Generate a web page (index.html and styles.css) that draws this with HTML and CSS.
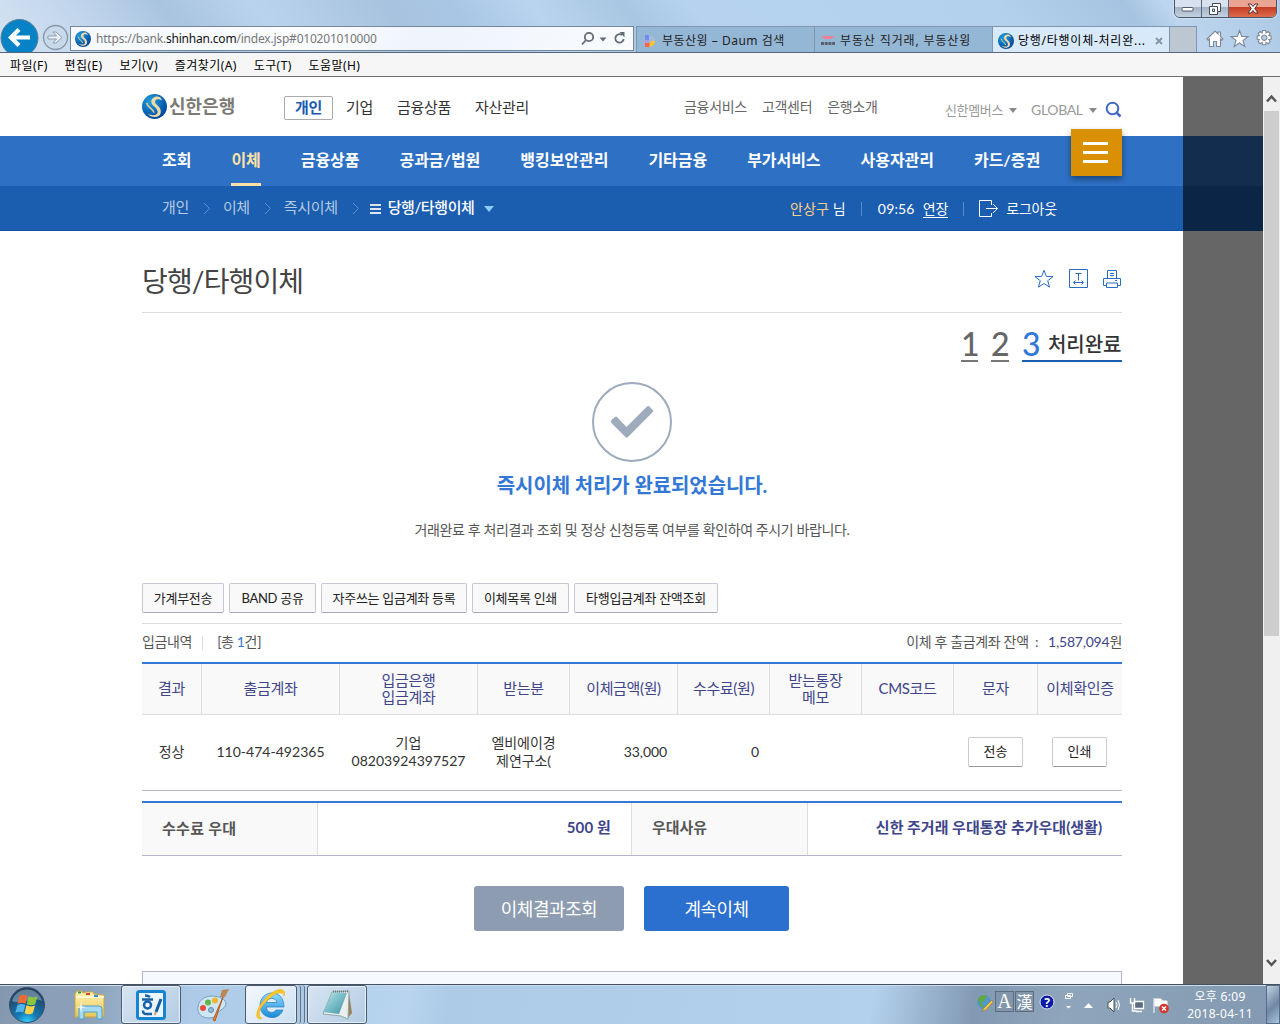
FILE: index.html
```html
<!DOCTYPE html>
<html lang="ko">
<head>
<meta charset="utf-8">
<title>당행/타행이체-처리완료</title>
<link rel="stylesheet" href="styles.css">
</head>
<body>
<svg class="defs" width="0" height="0">
  <defs>
    <radialGradient id="ball" cx="35%" cy="30%" r="75%"><stop offset="0" stop-color="#1fa0df"/><stop offset="1" stop-color="#00429a"/></radialGradient>
    <radialGradient id="orb" cx="50%" cy="100%" r="90%"><stop offset="0" stop-color="#35d6ff"/><stop offset=".35" stop-color="#1478b4"/><stop offset="1" stop-color="#24405f"/></radialGradient>
    <linearGradient id="folder" x1="0" y1="0" x2="0" y2="1"><stop offset="0" stop-color="#fff3b0"/><stop offset="1" stop-color="#e8c65a"/></linearGradient>
    <linearGradient id="ie" x1="0" y1="0" x2="0" y2="1"><stop offset="0" stop-color="#8fdcff"/><stop offset="1" stop-color="#1b8ad6"/></linearGradient>
    <linearGradient id="note" x1="0" y1="0" x2="1" y2="1"><stop offset="0" stop-color="#b9e6ea"/><stop offset="1" stop-color="#3a94a5"/></linearGradient>
    <symbol id="shinhan" viewBox="0 0 24 24">
      <circle cx="12" cy="12" r="12" fill="url(#ball)"/>
      <path d="M19.500 6.500 17.500 3C13 1 8.500 4 9 8c.5 3.800 6.500 5.500 6 9.500-.4 2.800-4.500 4-9.500 1.500 3.500 4.500 11.500 4.200 12.500-1 1.100-5.500-5.500-7.500-5.500-10.500 0-2.500 3-3.500 7-1z" fill="#f0dba6"/>
      <path d="M4.500 8.500c.5 4.500 6.500 5.500 7 9.500" fill="none" stroke="#e5cf98" stroke-width="1.500"/>
    </symbol>
  </defs>
</svg>

<header class="chrome">
  <div class="win-buttons"><i class="wb"><svg width="14" height="8"><rect x="1" y="2.500" width="11" height="3.500" rx="1" fill="#fff" stroke="#555b6b"/></svg></i><i class="wb"><svg width="14" height="14"><path d="M4.500 1.500h8v8h-3v3h-8v-8h3z" fill="#fff" stroke="#454b5b"/><path d="M4.500 4.500h5v5M4.500 7h2v2.500h-2z" fill="none" stroke="#454b5b"/></svg></i><i class="wb close"><svg width="14" height="12"><path d="M2 1h3l2 2.500L9 1h3L8.700 5.500 12 10H9L7 7.500 5 10H2l3.300-4.500z" fill="#fff" stroke="#5b2a2a"/></svg></i></div>
  <svg class="back" width="40" height="36" viewBox="0 0 40 36"><circle cx="19.500" cy="19" r="18.500" fill="#0583c6" stroke="#5a7b93"/><path d="M19 10.500 11 18.500l8 8M11.500 18.500H30" fill="none" stroke="#fff" stroke-width="4.200"/></svg>
  <svg class="fwd" width="27" height="27" viewBox="0 0 27 27"><circle cx="13.500" cy="13.500" r="12" fill="#c8d9ec" stroke="#8796aa" stroke-width="1.300"/><path d="M6 12h8.500l-3.500-4h3l6 5.500-6 5.500h-3l3.500-4H6z" fill="#eaf2fa" stroke="#8b9bb0"/></svg>
  <div class="address">
    <svg width="16" height="16"><use href="#shinhan"/></svg>
    <span class="url">https://bank.<b>shinhan.com</b>/index.jsp#010201010000</span>
    <svg width="48" height="16" viewBox="0 0 48 16"><g fill="none" stroke="#636b75" stroke-width="1.800"><circle cx="8" cy="6" r="4.200"/><path d="M5 9 1 13.500M41 4a4.200 4.200 0 1 0 1.700 4"/></g><path d="M18.500 6.500h7l-3.500 4zM38.500 1h5v5.500z" fill="#636b75"/></svg>
  </div>
  <div class="tabs">
    <div class="tab"><svg width="16" height="16" viewBox="0 0 16 16"><path d="M3 2h4v5H3z" fill="#6f8df5"/><path d="M3 7h4v4H3z" fill="#b99ae0"/><path d="M3 10h5v4H3z" fill="#f6654f"/><path d="M7 2a6 6 0 0 1 6 6h-4a2 2 0 0 0-2-2z" fill="#a9b9d8"/><path d="M13 8a6 6 0 0 1-5.500 6v-4A2 2 0 0 0 9 8z" fill="#ffc62d"/></svg><span class="tab-a">부동산윙 – Daum 검색</span></div>
    <div class="tab"><svg width="16" height="16"><path d="M1 3h14l-4 3H5z" fill="#ef7f93"/><path d="M1 10.500h14" stroke="#596171" stroke-width="3" stroke-dasharray="3 .7"/></svg><span class="tab-b">부동산 직거래, 부동산윙</span></div>
    <div class="tab on"><svg width="16" height="16"><use href="#shinhan"/></svg><span class="tab-c">당행/타행이체-처리완...</span><svg class="x" width="8" height="8"><path d="m1 1 6 6M7 1 1 7" stroke="#8693a3" stroke-width="1.800"/></svg></div>
    <div class="tab new"></div>
  </div>
  <svg class="tools" width="68" height="20" viewBox="0 0 68 20"><g fill="#fff" stroke="#7d8999" stroke-width="1.100"><path d="M1 10 9 2l3 3V3h2.500v4.500L17 10l-1.200 1.200L14.500 10v7.500h-4v-5h-3v5h-4V10l-1.300 1.200z"/><path d="m33.500 1.500 2.200 5.900 6.300.2-5 3.900 1.800 6-5.300-3.500-5.300 3.500 1.800-6-5-3.900 6.300-.2z"/><path d="m56.700 1.500 3 0 .4 2.300 2.100-1.300 2 2-1.300 2.100 2.300.5v3l-2.300.5 1.300 2.100-2 2-2.100-1.300-.4 2.300h-3l-.5-2.300-2.100 1.300-2-2 1.300-2.100-2.300-.5v-3l2.300-.5-1.300-2.100 2-2 2.100 1.300zM58.200 6a2.700 2.700 0 1 0 .1 0z" fill-rule="evenodd"/></g></svg>
</header>
<nav class="menubar"><span>파일(F)</span><span>편집(E)</span><span>보기(V)</span><span>즐겨찾기(A)</span><span>도구(T)</span><span>도움말(H)</span></nav>

<div class="viewport">
  <div class="page">
    <div class="top">
      <svg class="logo-mark" width="25" height="25"><use href="#shinhan"/></svg><span class="logo-text">신한은행</span>
      <div class="sites"><b>개인</b><span>기업</span><span>금융상품</span><span>자산관리</span></div>
      <div class="links"><span>금융서비스</span><span>고객센터</span><span>은행소개</span></div>
      <div class="util"><span>신한멤버스</span><i class="caret"></i><span class="global">GLOBAL</span><i class="caret"></i><svg width="17" height="17"><circle cx="7.500" cy="7.500" r="5.800" fill="none" stroke="#4068c4" stroke-width="2"/><path d="m11.500 11.500 4 4" stroke="#4068c4" stroke-width="2.500"/></svg></div>
    </div>
    <div class="gnb"><span>조회</span><span class="on">이체</span><span>금융상품</span><span>공과금/법원</span><span>뱅킹보안관리</span><span>기타금융</span><span>부가서비스</span><span>사용자관리</span><span>카드/증권</span><div class="burger"><i></i><i></i><i></i></div></div>
    <div class="crumbs">
      <div class="path"><span>개인</span><svg class="chev" width="8" height="13"><path d="m1 1 5.500 5.500L1 12"/></svg><span>이체</span><svg class="chev" width="8" height="13"><path d="m1 1 5.500 5.500L1 12"/></svg><span>즉시이체</span><svg class="chev" width="8" height="13"><path d="m1 1 5.500 5.500L1 12"/></svg><svg class="list" width="11" height="10"><path d="M0 1h11M0 5h11M0 9h11" stroke="#dce6f2" stroke-width="2"/></svg><b>당행/타행이체</b><svg class="drop" width="10" height="6"><path d="M0 0h10L5 6z" fill="#8dccff"/></svg></div>
      <div class="session"><span class="user"><em>안상구</em> 님</span><i class="bar"></i><span class="time">09:56</span><u>연장</u><i class="bar"></i><svg width="20" height="18" viewBox="0 0 20 18"><path d="M12.500 5V.5H.5v16h12V13M7 8.500h11.500M14 4l4.500 4.500L14 13" fill="none" stroke="#fff"/></svg><span class="logout">로그아웃</span></div>
    </div>

    <main>
      <div class="heading"><h1>당행/타행이체</h1>
        <div class="acts">
          <svg width="20" height="20" viewBox="0 0 20 20"><path d="m10 1.200 2.300 6.200 6.700.2-5.300 4.100 1.900 6.500L10 14.500l-5.600 3.700 1.900-6.500L1 7.600l6.700-.2z"/></svg>
          <svg width="19" height="19" viewBox="0 0 19 19"><path d="M.5.500h18v18H.5zM6.500 4.500h6M9.500 4.500v7M4.500 13.500h10M6.500 11.500l-2 2 2 2M12.500 11.500l2 2-2 2"/></svg>
          <svg width="18" height="19" viewBox="0 0 18 19"><path d="M4.500 9.500v-8h9v8M.5 9.500h17v7h-17z"/><path d="M3.500 14h11v4.500h-11z" class="paper"/><path d="M7 4.500h4M7 6.500h4M12 11.500h2"/></svg>
        </div>
      </div>
      <div class="steps"><span>1</span><span>2</span><span class="cur">3<b>처리완료</b></span></div>
      <div class="done">
        <svg width="80" height="80" viewBox="0 0 80 80"><circle cx="40" cy="40" r="39" fill="none" stroke="#9dabbc" stroke-width="2"/><path d="M19.500 38 23 35q1-.8 2 0l9.500 10L55 24.500q1.200-1.200 2.400 0l3.400 3.400q1 1 0 2L36 55q-1.300 1.300-2.600 0L19.500 41q-1.500-1.500 0-3z" fill="#9dabbc"/></svg>
        <h2>즉시이체 처리가 완료되었습니다.</h2>
        <p>거래완료 후 처리결과 조회 및 정상 신청등록 여부를 확인하여 주시기 바랍니다.</p>
      </div>
      <div class="btns"><button style="width:82px">가계부전송</button><button style="width:87px">BAND 공유</button><button style="width:146px">자주쓰는 입금계좌 등록</button><button style="width:97px">이체목록 인쇄</button><button style="width:144px">타행입금계좌 잔액조회</button></div>
      <div class="caption"><span>입금내역</span><i></i><span class="total">[총 <em>1</em>건]</span><span class="balance">이체 후 출금계좌 잔액 <span class="colon">:</span><strong>1,587,094</strong>원</span></div>
      <table class="result">
        <colgroup><col style="width:60px"><col style="width:138px"><col style="width:138px"><col style="width:92px"><col style="width:108px"><col style="width:92px"><col style="width:92px"><col style="width:92px"><col style="width:84px"><col style="width:84px"></colgroup>
        <thead><tr><th>결과</th><th>출금계좌</th><th>입금은행<br>입금계좌</th><th>받는분</th><th>이체금액(원)</th><th>수수료(원)</th><th>받는통장<br>메모</th><th>CMS코드</th><th>문자</th><th>이체확인증</th></tr></thead>
        <tbody><tr><td>정상</td><td class="acct">110-474-492365</td><td class="acct">기업<br>08203924397527</td><td>엘비에이경<br>제연구소(</td><td class="num">33,000</td><td class="num">0</td><td></td><td></td><td><button>전송</button></td><td><button>인쇄</button></td></tr></tbody>
      </table>
      <div class="benefit"><div class="k k1">수수료 우대</div><div class="v">500 원</div><div class="k">우대사유</div><div class="v last">신한 주거래 우대통장 추가우대(생활)</div></div>
      <div class="cta"><button class="gray">이체결과조회</button><button class="blue">계속이체</button></div>
      <div class="notice"></div>
    </main>
  </div>
  <div class="dim"></div>
  <div class="scroll"><svg width="17" height="34"><path d="m4 24.500 4.500-5 4.500 5" /></svg><div class="thumb"></div><svg class="down" width="17" height="34"><path d="m4 10 4.500 5 4.500-5"/></svg></div>
</div>

<footer class="taskbar">
  <svg class="start" width="38" height="38" viewBox="0 0 38 38"><circle cx="19" cy="19" r="17.500" fill="url(#orb)" stroke="#344f6c"/><path d="M4 15a15.500 15.500 0 0 1 30 0c-8-5-22 4-30 0z" fill="#c3dcec" opacity=".4"/><path d="M11.500 10q4-2.500 8-.3l-2 8q-4-2-8 .3z" fill="#ef6a35"/><path d="M20.500 10.300q4 2.200 9 0l-2.300 8q-4.500 2-8.400-.3z" fill="#8cc63e"/><path d="M9.300 19.200q4-2.400 8-.3l-2 7.700q-3.500-2-8 .2z" fill="#52b4e8"/><path d="M18.500 19.300q4 2.200 8.500.2l-2.200 7.700q-4.500 2-8.200-.3z" fill="#ffd24a"/></svg>
  <svg class="explorer" width="34" height="34" viewBox="0 0 34 34"><path d="M2 6 4 3h5l1 2 3-1h7l1 2 10 1v22H2z" fill="url(#folder)" stroke="#c5a54a"/><path d="M3 9h28" stroke="#fff8d0" stroke-width="2"/><path d="M5 4.500h3" stroke="#2d9c3c" stroke-width="2"/><path d="M13 6h4" stroke="#d8402f" stroke-width="2"/><path d="M21 8h4" stroke="#2f8fd0" stroke-width="2"/><path d="M6 21q0-3 3-3h17q3 0 3 3v10h-5v-7H11v7H6z" fill="#a4d9f0" stroke="#4aa0c8"/><path d="m8 13 1 5.500 4.500.5-4.500 1L8 25l-1-5-4.500-1 4.500-.5z" fill="#fff" opacity=".8"/></svg>
  <div class="app hwp"><svg width="32" height="32" viewBox="0 0 32 32"><rect x="2.500" y="2.500" width="27" height="27" rx="2" fill="#eaf5fd" stroke="#1684d0" stroke-width="3"/><g fill="none" stroke="#1862aa" stroke-width="2.500"><path d="M10 6.500q3 0 5 1.500M7 10.500h11M8 21.500q0 4 4 3.500h5"/><circle cx="12.500" cy="16" r="3.500"/></g><path d="M26 10 21 23" stroke="#195f9d" stroke-width="3"/><path d="m21 23-1.500 3" stroke="#c9a36b" stroke-width="2"/></svg></div>
  <svg class="paint" width="34" height="34" viewBox="0 0 34 34"><path d="M2 19C3 8 17 6 25 10s5 9 0 12-4 8-12 8C6 30 1 26 2 19z" fill="#cfe7f5" stroke="#759fba"/><circle cx="7" cy="20" r="3" fill="#e94b3b"/><circle cx="12" cy="14.500" r="3" fill="#60b646"/><circle cx="19" cy="12.500" r="3" fill="#f3b52d"/><circle cx="15" cy="22" r="2.500" fill="#8ebdda" stroke="#5e8caa"/><path d="m27 9-8 24-2-1z" fill="#e88a37" stroke="#b35c20"/><path d="m24 9 2-7 7-1-4 8z" fill="#b98756"/></svg>
  <div class="app ie"><svg width="34" height="34" viewBox="0 0 34 34"><path d="M29 22c-2 5-6 7.500-11 7.500-7 0-12-5-12-12s5-12.500 12-12.500 12 5 12 14H12.500c0 6 7 7 9.500 3zM12.500 14.500H23c-1-5.500-9.500-5.500-10.500 0z" fill="url(#ie)" stroke="#217fc0" stroke-width=".7"/><path d="M6 31C-3 30 8 9 21 3c8-3.500 11 0 9 5 0-5-8-4-14 2C6 18 2 28 8 30z" fill="#ffc928" stroke="#e2a111" stroke-width=".5"/></svg></div>
  <i class="stack"></i><i class="stack"></i>
  <div class="app memo"><svg width="34" height="34" viewBox="0 0 34 34"><path d="m29 5 3 20-5 6z" fill="#9a8358"/><path d="m12 4 17-1-1 28-7-3-18-2z" fill="#eee" stroke="#8aa"/><path d="m13 4 14 1-8 21-16-2z" fill="url(#note)"/><path d="M13 3.500h16" stroke="#777" stroke-width="2" stroke-dasharray="1 1"/></svg></div>
  <div class="tray">
    <svg class="globe" width="17" height="18" viewBox="0 0 17 18"><circle cx="8" cy="8" r="7" fill="#4e9ac9"/><path d="M2 4q5-5 9-2l-3 5-3 1 3 6-4-2z" fill="#64a83f"/><path d="m16 6-8 8-2 3 4-1 7-8z" fill="#f7c747" stroke="#9b7430" stroke-width=".6"/></svg>
    <span class="ime latin">A</span><span class="ime">漢</span>
    <svg class="help" width="16" height="16"><circle cx="8" cy="8" r="7" fill="#0c1ba6" stroke="#dce4f3"/><text x="8" y="12.500" text-anchor="middle">?</text></svg>
    <svg class="opts" width="10" height="18" viewBox="0 0 10 18"><path d="M3.500 1.500h5v3h-5zM1.500 3.500h5v3h-5z" fill="#8fa4ba" stroke="#fff"/><path d="M2 14h5l-2.500 2.500z" fill="#fff"/></svg>
    <svg class="up" width="9" height="5"><path d="M0 5h9L4.500 0z" fill="#fff"/></svg>
    <svg class="vol" width="13" height="16" viewBox="0 0 13 16"><path d="M1 5h2l4-4v14l-4-4H1z" fill="#fff" stroke="#455"/><path d="M9 5q2 3 0 6M11 3q3 5 0 10" fill="none" stroke="#fff"/></svg>
    <svg class="net" width="16" height="16" viewBox="0 0 16 16"><path d="M5.500 4.500h9v7h-9zM7 14.500h6" fill="#5c6c7e" stroke="#fff" stroke-width="1.300"/><path d="M1.500 1v5h4V1M3.500 6v8h4" fill="none" stroke="#fff" stroke-width="1.300"/></svg>
    <svg class="flag" width="17" height="17" viewBox="0 0 17 17"><path d="M1 1v15M2 2h6l1 2h5v7H8L7 9H2z" fill="#fff" stroke="#fff"/><circle cx="11" cy="11.500" r="4.800" fill="#d4362d"/><path d="m9 9.500 4 4M13 9.500l-4 4" stroke="#fff" stroke-width="1.400"/></svg>
    <div class="clock"><span>오후 6:09</span><span>2018-04-11</span></div>
    <i class="desk"></i>
  </div>
</footer>
</body>
</html>
```
FILE: styles.css
```css
* { box-sizing: border-box; }
body { margin: 0; width: 1280px; height: 1024px; overflow: hidden; display: flex; flex-direction: column; font: 14px/18px Lato, "Noto Sans CJK KR", sans-serif; color: #333; background: #fff; }
svg { display: block; flex: none; }
.defs { position: absolute; }
i, em { font-style: normal; }
span, b, button, em { white-space: nowrap; }
button { padding: 0; font: inherit; display: block; }

.chrome { position: relative; height: 53px; flex: none; display: flex; align-items: flex-start; overflow: hidden; border-bottom: 1px solid #58677d; font: 12px/16px "Noto Sans", "Noto Sans CJK KR", sans-serif;
  background: linear-gradient(52deg, #d5e4f3 0, #bfd4eb 9%, #a9c4e0 15%, #bad3ed 22%, #a8c3df 32%, #a9c6e5 37%, #b9d4ef 43%, #a9c6e2 50%, #b6d2ee 55%, #b3d0ec 78%, #a6c3e1 88%, #bdd5ee 91%, #acc8e5 100%); }
.back { margin-top: 19px; width: 40px; }
.fwd { margin: 24px 0 0 2px; }
.address { width: 564px; height: 25px; margin: 26px 0 0 1px; border: 1px solid #76889e; background: linear-gradient(110deg, #f5f9fd, #fbfdff 45%, #eef4fb 62%, #f9fbfe); display: flex; align-items: center; padding: 0 4px; margin-right: 2px; }
.url { flex: 1; margin-left: 5px; color: #777; letter-spacing: -.2px; }
.url b { font-weight: 400; color: #111; }
.tabs { display: flex; margin-top: 26px; height: 27px; }
.tab { width: 178px; border: 1px solid #7f96af; border-width: 1px 0 0 1px; background: #95b7d6; display: flex; align-items: center; padding: 2px 0 0 5px; color: #222; }
.tab span { margin-left: 4px; }
.tab-a { letter-spacing: .5px; }
.tab-b { letter-spacing: .87px; }
.tab.on { width: 177px; background: #d8eafa; color: #000; }
.tab-c { letter-spacing: .75px; width: 128px; }
.x { margin-left: 9px; }
.tab.new { width: 28px; background: #bcc7d1; border-right-width: 1px; }
.tools { margin: 29px 0 0 9px; }
.win-buttons { position: absolute; right: 3px; top: -4px; display: flex; height: 22px; border: 1px solid #48566b; border-radius: 0 0 6px 6px; overflow: hidden; box-shadow: 0 0 2px #fff; }
.wb { width: 27px; display: flex; justify-content: center; align-items: center; padding-top: 3px; border-right: 1px solid #56657b; background: linear-gradient(#d8e2ee 50%, #a2b2c4 50%, #c4d1df); }
.wb.close { width: 47px; border: 0; background: linear-gradient(#e9a493 50%, #c43c22 50%, #dd6c4c); }
.menubar { height: 24px; flex: none; background: #f6f6f6; border-bottom: 1px solid #6e6e6e; display: flex; gap: 16.8px; padding: 4px 0 0 10px; font: 12px/18px "Noto Sans", "Noto Sans CJK KR", sans-serif; letter-spacing: .43px; color: #000; }

.viewport { flex: 1; min-height: 0; display: flex; overflow: hidden; }
.page { width: 1183px; overflow: hidden; }
.top { height: 59px; display: flex; padding-left: 142px; position: relative; }
.logo-mark { margin-top: 17px; }
.logo-text { font-size: 18px; line-height: 24px; font-weight: 700; color: #7c7a72; margin: 17px 0 0 2px; width: 66px; }
.sites { display: flex; margin: 19px 0 0 49px; font-size: 15px; line-height: 22px; letter-spacing: -.3px; height: 24px; }
.sites b { width: 49px; border: 1px solid #aaa; border-radius: 2px; text-align: center; color: #185bb0; margin-right: 13px; line-height: 21px; }
.sites span { margin-right: 24px; }
.links { position: absolute; left: 684px; top: 21px; display: flex; gap: 15px; color: #666; letter-spacing: -.3px; }
.util { position: absolute; left: 945px; top: 24px; display: flex; align-items: center; color: #999; font-size: 13px; letter-spacing: -.35px; }
.util > span { margin-top: -1px; }
.util .global { font-size: 14px; margin: 0 0 0 14px; letter-spacing: -.35px; }
.caret { border: 4px solid transparent; border-top: 5px solid #888; border-bottom: 0; margin: 0 0 0 6px; }
.util svg { margin: -1px 0 0 8px; }
.gnb { height: 50px; background: #2d70c4; display: flex; gap: 40px; padding-left: 162px; color: #fff; font-size: 16px; font-weight: 700; line-height: 48px; letter-spacing: -.04px; position: relative; }
.gnb .on { color: #ffe0a5; border-bottom: 3px solid #ffe0a5; }
.burger { position: absolute; left: 1071px; top: -7px; width: 51px; height: 47px; background: #d99004; box-shadow: 0 3px 6px rgba(0,0,0,.4); display: flex; flex-direction: column; gap: 6px; padding: 13px 0 0 12px; z-index: 1; }
.burger i { width: 25px; height: 3px; background: #fff; }
.crumbs { height: 45px; background: #1b5dae; border-bottom: 1px solid #14509e; padding-left: 162px; display: flex; position: relative; color: #fff; }
.path { display: flex; align-items: center; height: 44px; font-size: 15px; letter-spacing: -.35px; }
.path span { color: #b4cae5; }
.path b { font-weight: 500; margin: 0 10px 0 7px; letter-spacing: -.4px; }
.path span, .path b { margin-top: -2px; }
.chev { margin: 1px 12px 0 14px; fill: none; stroke: #5c8fce; }
.list { margin: 1px 0 0 -2px; }
.drop { margin: 2px 0 0; }
.session { position: absolute; left: 790px; top: 0; height: 46px; display: flex; align-items: center; letter-spacing: -.2px; }
.user { letter-spacing: .15px; }
.session em { color: #ffcf8a; }
.bar { width: 1px; height: 14px; background: #568ac8; margin: 0 15px; }
.time { width: 37px; margin: 0 8px 0 1px; letter-spacing: .15px; }
.session u { text-decoration: none; line-height: 16px; border-bottom: 1px solid #fff; }
.logout { margin-left: 7px; }

main { width: 980px; margin-left: 142px; }
.heading { height: 82px; border-bottom: 1px solid #ddd; display: flex; justify-content: space-between; }
h1 { margin: 30px 0 0; font-size: 28px; font-weight: 400; line-height: 40px; letter-spacing: -.85px; color: #444; }
.acts { display: flex; gap: 15px; padding: 38px 1px 0 0; fill: none; stroke: #2b6cbf; }
.paper { fill: #fff; }
.steps { display: flex; justify-content: flex-end; gap: 13px; height: 69px; padding-top: 14px; font-size: 32px; line-height: 34px; font-weight: 500; color: #666; }
.steps span { height: 35px; border-bottom: 2px solid #777; width: 18px; letter-spacing: -.5px; }
.steps span:first-child { width: 17px; }
.steps .cur { width: 100px; color: #3478d6; border-color: #1b5dae; display: flex; }
.steps b { font-size: 20px; font-weight: 500; color: #333; margin-left: 8px; letter-spacing: -.1px; }
.done { display: flex; flex-direction: column; align-items: center; height: 201px; }
h2 { margin: 9px 0 0; font-size: 20px; line-height: 28px; letter-spacing: -.1px; color: #3478d6; }
.done p { margin: 22px 0 0; letter-spacing: -.38px; color: #555; }
.btns { display: flex; gap: 5px; height: 40px; }
.btns button { height: 30px; border: 1px solid #c5c7d2; border-bottom-color: #a6a7b3; border-radius: 2px; background: #f9f9f9; font-size: 13px; line-height: 27px; letter-spacing: -.28px; color: #222; }
.caption { border-top: 1px solid #ddd; height: 39px; display: flex; align-items: center; padding-bottom: 2px; letter-spacing: -.35px; color: #555; }
.caption i { width: 1px; height: 14px; background: #ddd; margin: 2px 14px 0 10px; }
.caption em { color: #3478d6; }
.balance { margin-left: auto; }
.colon { margin: 0 10px 0 3px; }
.caption strong { font-weight: 400; color: #40458a; letter-spacing: -.2px; }
.result { width: 980px; table-layout: fixed; border-collapse: separate; border-spacing: 0; border-top: 2px solid #3478d6; border-bottom: 1px solid #b5b5cd; }
th { height: 51px; padding: 0 0 1px; background: #f9f9f9; border-bottom: 1px solid #ddd; border-right: 1px solid #ddd; font-size: 15px; line-height: 17px; font-weight: 400; letter-spacing: -.35px; color: #40458a; }
th:last-child { border-right: 0; }
td { height: 75px; padding: 0 1px 2px 0; text-align: center; line-height: 18px; letter-spacing: -.1px; }
td.acct { letter-spacing: .02px; }
td.num { text-align: right; padding-right: 11px; }
td button { width: 55px; height: 30px; margin: 0 auto; background: #fff; border: 1px solid #ccc; border-bottom-color: #999; border-radius: 2px; font-size: 13px; line-height: 27px; color: #222; }
.benefit { display: flex; height: 55px; margin-top: 10px; border-top: 2px solid #3478d6; border-bottom: 1px solid #b5b5cd; font-size: 15px; font-weight: 700; line-height: 48px; letter-spacing: -.05px; }
.benefit .k { width: 176px; padding-left: 20px; background: #f9f9f9; border-right: 1px solid #ddd; color: #555; }
.benefit .k1 { line-height: 50px; letter-spacing: .3px; }
.benefit .v { width: 314px; padding-right: 20px; text-align: right; color: #40458a; border-right: 1px solid #ddd; letter-spacing: .15px; }
.benefit .last { border: 0; letter-spacing: 0; }
.cta { display: flex; justify-content: center; gap: 20px; padding: 30px 1px 0 0; height: 115px; }
.cta button { width: 150px; height: 45px; border: 0; border-radius: 3px; color: #fff; font-size: 18px; line-height: 44px; letter-spacing: -.5px; background: #8d9cb0; }
.cta .blue { width: 145px; background: #2b70cf; }
.notice { height: 40px; border: 1px solid #b5b5cd; background: #f6f9fe; }
.dim { width: 80px; background: linear-gradient(#666 59px, #122d4e 59px, #122d4e 109px, #0b2546 109px, #0b2546 154px, #666 154px); }
.scroll { width: 17px; background: #f0f0f0; padding-left: 1px; display: flex; flex-direction: column; }
.scroll svg { margin-left: -1px; fill: none; stroke: #555; stroke-width: 2.5; }
.thumb { width: 15px; height: 525px; background: #cdcdcd; }
.scroll .down { margin-top: auto; }

.taskbar { height: 40px; flex: none; display: flex; align-items: center; border-top: 1px solid #455160; box-shadow: inset 0 1px #c9dceb; background: linear-gradient(100deg, #8398af 0, #8ba0b8 4%, #8ba0b8 7%, #adcbe8 15%, #b8d4ef 32%, #adcae7 35%, #b3d0ed 68%, #a2bdd8 71%, #8299b3 76%, #8fa5bb 83%, #8299b1 100%); }
.start { margin-left: 8px; }
.explorer { margin-left: 27px; }
.app { height: 39px; border: 1px solid #4c5c70; border-radius: 3px; box-shadow: inset 0 0 1px 1px #e7f1fa; background: linear-gradient(135deg, #d7e4f1, #b3cce4); display: flex; align-items: center; justify-content: center; }
.hwp { width: 60px; margin-left: 14px; }
.paint { margin-left: 15px; }
.ie { width: 52px; margin-left: 15px; background: linear-gradient(135deg, #f4f8fc, #cbdff1); }
.stack { width: 4px; height: 39px; border-right: 1px solid #62758b; border-radius: 0 3px 3px 0; background: #adc8e2; }
.memo { width: 60px; margin-left: 2px; }
.tray { margin-left: auto; display: flex; height: 39px; align-items: flex-start; font-family: "Noto Sans", "Noto Sans CJK KR", sans-serif; color: #fff; }
.globe { margin: 9px 2px 0 0; }
.ime { width: 19px; height: 21px; margin: 6px 1px 0 0; border: 1px solid #5d6d80; background: #8195ab; font: 16px/19px "Noto Sans CJK KR", sans-serif; text-align: center; }
.latin { font-family: "Liberation Serif", serif; font-size: 20px; }
.help { margin: 9px 9px 0 4px; }
.help text { fill: #fff; font: bold 12px "Noto Sans", sans-serif; }
.opts { margin: 7px 10px 0 0; }
.up { margin: 18px 14px 0 0; }
.vol { margin: 12px 9px 0 0; }
.net { margin: 12px 8px 0 0; }
.flag { margin: 12px 16px 0 0; }
.clock { width: 68px; display: flex; flex-direction: column; align-items: center; font-size: 12px; line-height: 17px; padding-top: 3px; letter-spacing: .3px; }
.desk { width: 14px; height: 39px; margin-left: 12px; border: 1px solid #566c86; background: linear-gradient(135deg, #bfd0e0, #6f88a4 55%, #a9c4de); }
```
